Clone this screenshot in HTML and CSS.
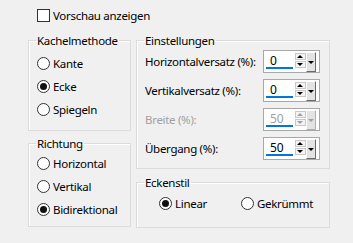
FILE: index.html
```html
<!DOCTYPE html>
<html lang="de">
<head>
  <meta charset="UTF-8">
  <title>Kacheln</title>
  <link rel="stylesheet" href="styles.css">
</head>
<body>
  <div class="dialog">
    <div class="check"><span class="box"></span>Vorschau anzeigen</div>

    <div class="panes">
      <div class="col col-left">
        <fieldset class="group g-kachel">
          <legend>Kachelmethode</legend>
          <div class="opt"><span class="radio"></span>Kante</div>
          <div class="opt"><span class="radio on"></span>Ecke</div>
          <div class="opt"><span class="radio"></span>Spiegeln</div>
        </fieldset>
        <fieldset class="group g-richtung">
          <legend>Richtung</legend>
          <div class="opt"><span class="radio"></span>Horizontal</div>
          <div class="opt"><span class="radio"></span>Vertikal</div>
          <div class="opt"><span class="radio on"></span>Bidirektional</div>
        </fieldset>
      </div>

      <div class="col col-right">
        <fieldset class="group g-einst">
          <legend>Einstellungen</legend>
          <div class="row">
            <span>Horizontalversatz (%):</span>
            <div class="spin"><div class="field">0</div><div class="arrows"><span class="arr up"></span><span class="arr down"></span></div><div class="drop"></div></div>
          </div>
          <div class="row">
            <span>Vertikalversatz (%):</span>
            <div class="spin"><div class="field">0</div><div class="arrows"><span class="arr up"></span><span class="arr down"></span></div><div class="drop"></div></div>
          </div>
          <div class="row disabled">
            <span>Breite (%):</span>
            <div class="spin"><div class="field">50</div><div class="arrows"><span class="arr up"></span><span class="arr down"></span></div><div class="drop"></div></div>
          </div>
          <div class="row">
            <span>Übergang (%):</span>
            <div class="spin"><div class="field">50</div><div class="arrows"><span class="arr up"></span><span class="arr down"></span></div><div class="drop"></div></div>
          </div>
        </fieldset>
        <fieldset class="group g-ecke">
          <legend>Eckenstil</legend>
          <div class="inline">
            <div class="opt"><span class="radio on"></span>Linear</div>
            <div class="opt"><span class="radio"></span>Gekrümmt</div>
          </div>
        </fieldset>
      </div>
    </div>
  </div>
</body>
</html>
```

FILE: styles.css
```css
/* base */
* { box-sizing: border-box; }
body {
  margin: 0;
  background: #f0f0f0;
  font-family: 'Noto Sans', 'Open Sans', sans-serif;
  font-size: 11.5px;
  letter-spacing: -0.3px;
  line-height: 15px;
  color: #000;
  white-space: nowrap;
}
.dialog {
  width: 353px;
  height: 243px;
  padding-top: 8px;
}

/* checkbox */
.check {
  display: flex;
  align-items: center;
  height: 15px;
  padding-left: 37px;
}
.box {
  width: 13px;
  height: 13px;
  border: 1px solid #333;
  background: #fff;
  margin-right: 3px;
}

/* columns */
.panes {
  display: flex;
  gap: 5px;
  padding-left: 28px;
  margin-top: 10px;
}
.col { display: flex; flex-direction: column; }
.col-left { width: 103px; gap: 5px; }
.col-right { width: 194px; gap: 6px; }

/* group boxes */
.group {
  margin: 0;
  min-width: 0;
  border: 1px solid #dcdcdc;
  box-shadow: inset 1px 1px 0 #fff;
  padding: 0 0 0 8px;
}
.group legend {
  padding: 0 1px;
  margin-left: -1px;
}
.g-kachel { padding-top: 4px; padding-bottom: 9px; }
.g-richtung { padding-top: 1px; padding-bottom: 5px; }
.g-einst { padding: 2px 9px 8px 8px; }
.g-ecke { padding-top: 2px; padding-bottom: 12px; }

/* radios */
.opt {
  display: flex;
  align-items: center;
  height: 23px;
}
.radio {
  width: 13px;
  height: 13px;
  border: 1px solid #333;
  border-radius: 50%;
  background: #fff;
  margin-right: 3px;
  display: flex;
  align-items: center;
  justify-content: center;
}
.radio.on::after {
  content: '';
  width: 7px;
  height: 7px;
  border-radius: 50%;
  background: #111;
}
.inline {
  display: flex;
  padding-left: 14px;
}
.inline .opt { width: 82px; }

/* spinner rows */
.row {
  display: flex;
  align-items: center;
  justify-content: space-between;
  height: 23px;
  margin-bottom: 6px;
}
.row:last-child { margin-bottom: 0; }
.spin {
  display: flex;
  width: 57px;
  height: 23px;
  border: 1px solid #a8a8a8;
  background: #fff;
  padding: 1px 3px 1px 1px;
  letter-spacing: 0;
}
.field {
  width: 29px;
  padding: 2px 0 0 4px;
  border-bottom: 2px solid #0078d7;
  margin: 0 2px 2px 1px;
  line-height: 14px;
  font-size: 12px;
}
.arrows {
  display: flex;
  flex-direction: column;
  gap: 1px;
  width: 11px;
  padding-top: 1px;
}
.arr {
  height: 7px;
  border: 1px solid #c8c8c8;
  background: #f4f4f4;
  display: flex;
  align-items: center;
  justify-content: center;
}
.arr.up::after {
  content: '';
  border-left: 3px solid transparent;
  border-right: 3px solid transparent;
  border-bottom: 3px solid #000;
}
.arr.down::after {
  content: '';
  border-left: 3px solid transparent;
  border-right: 3px solid transparent;
  border-top: 3px solid #000;
}
.drop {
  width: 11px;
  height: 20px;
  background: #e3e3e3;
  border-top: 1px solid #fff;
  border-left: 1px solid #fff;
  border-right: 1px solid #6a6a6a;
  border-bottom: 1px solid #6a6a6a;
  display: flex;
  align-items: center;
  justify-content: center;
}
.drop::after {
  content: '';
  border-left: 3px solid transparent;
  border-right: 3px solid transparent;
  border-top: 3px solid #000;
}

/* disabled */
.disabled { color: #a0a0a0; }
.disabled .arr.up::after { border-bottom-color: #a0a0a0; }
.disabled .arr.down::after { border-top-color: #a0a0a0; }
.disabled .drop::after { border-top-color: #a0a0a0; }
.disabled .drop { border-right-color: #b0b0b0; border-bottom-color: #b0b0b0; }
```
